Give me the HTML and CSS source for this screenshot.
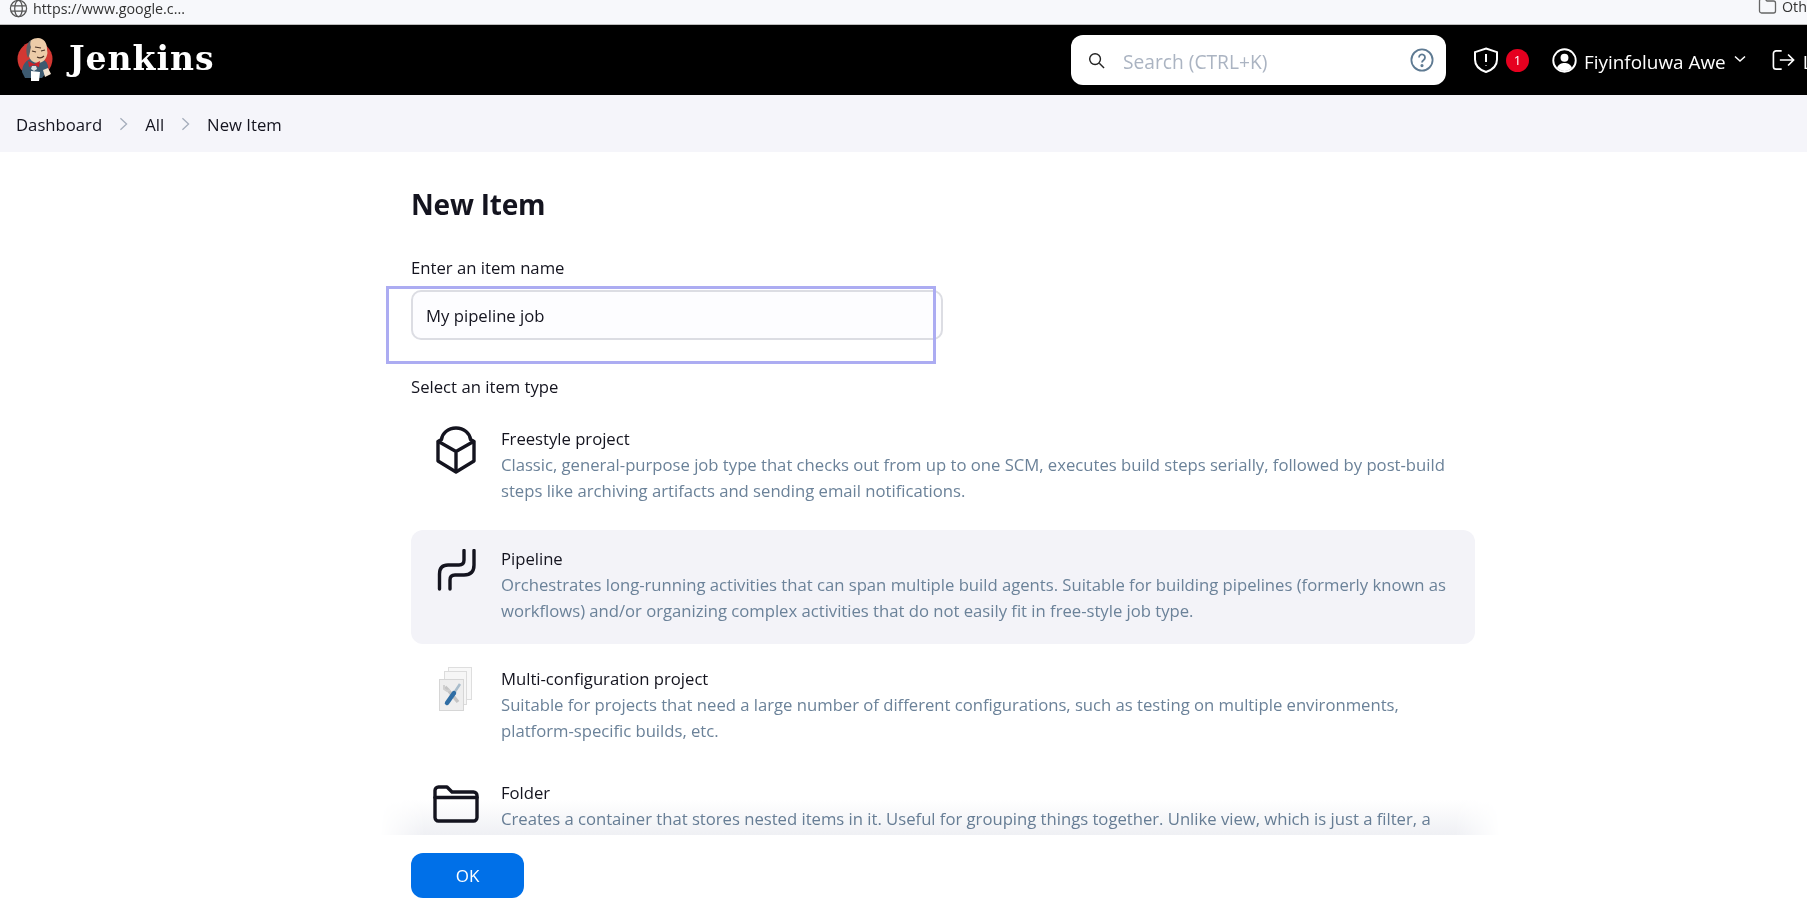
FILE: index.html
```html
<!DOCTYPE html>
<html lang="en">
<head>
<meta charset="utf-8">
<title>New Item - Jenkins</title>
<link rel="stylesheet" href="styles.css">
</head>
<body>
<div class="tabbar">
  <div class="tab">
    <svg class="globe" viewBox="0 0 20 20"><circle cx="10" cy="10" r="8.5"/><ellipse cx="10" cy="10" rx="4" ry="8.5"/><path d="M2 7.2h16M2 12.8h16"/></svg>
    <span>https://www.google.c...</span>
  </div>
  <div class="tab">
    <svg class="bookmark" viewBox="0 0 18 16"><path d="M1 3a2 2 0 0 1 2-2h3.5l2 2H15a2 2 0 0 1 2 2v8a2 2 0 0 1-2 2H3a2 2 0 0 1-2-2z"/></svg>
    <span>Oth</span>
  </div>
</div>
<header class="header">
  <div class="brand">
    <svg class="logo" viewBox="0 0 37 43">
      <circle cx="18" cy="21" r="17.500" fill="#d33833"/>
      <path d="M5 34c0-6 3-11 8-13l12 0c5 2 7 7 6 12l-6 7H8z" fill="#3d5a70"/>
      <path d="M11 9C11 3 16 0 21 0c6 0 9 5 9 11 0 2 1 4 0 6-1 5-5 8-9 8-5 0-8-3-9-7-1-3-1-6 0-9z" fill="#eccba8"/>
      <path d="M11 20C8 14 9 5 14 2c-1 3-1 5 0 7-1 3-1 8-3 11z" fill="#5b5f66"/>
      <path d="M18 9l6 1M15 13l4 1M24 13l4-1M20 19c2 1 5 1 7-1" stroke="#4a3226" stroke-width="1.200" fill="none"/>
      <path d="M11 23l6 3 6-3-1 6-5-2-5 2z" fill="#c8202a"/>
      <path d="M15 28h4l1 3-3 2-3-2z" fill="#d9dde0"/>
      <path d="M14 33l9 1-1 9H14z" fill="#fff"/>
      <path d="M26 32l5-2 3 6-6 3z" fill="#f3e4d2"/>
    </svg>
    <span class="wordmark">Jenkins</span>
  </div>
  <div class="header-right">
    <div class="search">
      <svg class="search-icon" viewBox="0 0 18 18"><circle cx="7.5" cy="7.5" r="5.7"/><path d="M12 12l5 5"/></svg>
      <span class="search-text">Search (CTRL+K)</span>
      <svg class="help" viewBox="0 0 24 24"><circle cx="12" cy="12" r="10.6"/><path d="M9 9.400a3 3 0 1 1 4.700 2.500c-1 .7-1.700 1.200-1.700 2.600"/><circle class="dot" cx="12" cy="17.600" r=".7"/></svg>
    </div>
    <div class="alerts">
      <svg class="shield" viewBox="0 0 26 26"><path d="M13 1.500l11 3.600v7.400c0 6-4.400 10.300-11 12.500C6.400 22.800 2 18.500 2 12.500V5.100z"/><path d="M13 7v8M13 18.500v.6"/></svg>
      <span class="badge">1</span>
    </div>
    <div class="user">
      <svg class="avatar" viewBox="0 0 24 24"><circle class="ring" cx="12" cy="12" r="10.800"/><circle class="fill" cx="12" cy="9.300" r="3.800"/><path class="fill" d="M4.800 19c1.500-3.600 4.200-4.600 7.200-4.600s5.700 1 7.200 4.600A10 10 0 0 1 12 22a10 10 0 0 1-7.200-3z"/></svg>
      <span class="username">Fiyinfoluwa Awe</span>
      <svg class="chev" viewBox="0 0 12 8"><path d="M1 1.500l5 4.500 5-4.500"/></svg>
    </div>
    <div class="logout">
      <svg class="logout-icon" viewBox="0 0 26 24"><path d="M11 2H5a3 3 0 0 0-3 3v14a3 3 0 0 0 3 3h6M9 12h15M18 6l6 6-6 6"/></svg>
      <span class="username">Log out</span>
    </div>
  </div>
</header>
<nav class="crumbs">
  <span>Dashboard</span>
  <svg class="sep" viewBox="0 0 10 16"><path d="M1.500 1.500L8.500 8l-7 6.500"/></svg>
  <span>All</span>
  <svg class="sep" viewBox="0 0 10 16"><path d="M1.500 1.500L8.500 8l-7 6.500"/></svg>
  <span>New Item</span>
</nav>
<main class="main">
  <h1 class="title">New Item</h1>
  <label class="field-label">Enter an item name</label>
  <div class="input">My pipeline job</div>
  <p class="type-label">Select an item type</p>
  <ul class="items">
    <li class="item">
      <div class="icon-cell">
        <svg class="item-icon icon-freestyle" viewBox="0 0 40 48"><path d="M20 2c8 0 14 5.500 14.500 11.500l3.500 2v19.500L20 46 2 35V15.500l3.500-2C6 7.500 12 2 20 2z"/><path d="M2.500 15.500L20 25.500l17.500-10M20 25.500V45"/></svg>
      </div>
      <div class="item-body">
        <div class="item-name">Freestyle project</div>
        <div class="item-desc">Classic, general-purpose job type that checks out from up to one SCM, executes build steps serially, followed by post&#8209;build steps like archiving artifacts and sending email notifications.</div>
      </div>
    </li>
    <li class="item active">
      <div class="icon-cell">
        <svg class="item-icon icon-pipeline" viewBox="0 0 39 42"><path d="M2.500 40V25Q2.500 16 11 16H22Q27 16 27 11V1.500"/><path d="M13 40V31Q13 26 18 26H27Q37 26 37 16V1.500"/></svg>
      </div>
      <div class="item-body">
        <div class="item-name">Pipeline</div>
        <div class="item-desc">Orchestrates long-running activities that can span multiple build agents. Suitable for building pipelines (formerly known as workflows) and/or organizing complex activities that do not easily fit in free-style job type.</div>
      </div>
    </li>
    <li class="item item-short">
      <div class="icon-cell">
        <svg class="icon-multi" viewBox="0 0 33 44">
          <rect x="9.500" y=".5" width="23" height="32" fill="#f8f8f8" stroke="#dedede"/>
          <rect x="5.500" y="4.500" width="22" height="33" fill="#f6f6f6" stroke="#dcdcdc"/>
          <rect x=".5" y="12.500" width="24" height="31" fill="#eeeeee" stroke="#d6d6d6"/>
          <path d="M6 20l3 3 10 12" stroke="#c4c4c4" stroke-width="3.500"/>
          <path d="M5 18v4l3 2 3-1" stroke="#d0d0d0" stroke-width="2"/>
          <path d="M21 17l-6 9" stroke="#a8bccb" stroke-width="2.500"/>
          <path d="M15 26l-7 10" stroke="#2f6ea5" stroke-width="4.500" stroke-linecap="round"/>
        </svg>
      </div>
      <div class="item-body">
        <div class="item-name">Multi-configuration project</div>
        <div class="item-desc">Suitable for projects that need a large number of different configurations, such as testing on multiple environments, platform-specific builds, etc.</div>
      </div>
    </li>
    <li class="item">
      <div class="icon-cell">
        <svg class="item-icon icon-folder" viewBox="0 0 46 38"><path d="M2 5.500a3.500 3.500 0 0 1 3.500-3.500H14l5 5h21.500a3.500 3.500 0 0 1 3.500 3.500V32.500a3.500 3.500 0 0 1-3.500 3.500H5.500A3.500 3.500 0 0 1 2 32.500z"/><path d="M2 12.500h42"/></svg>
      </div>
      <div class="item-body">
        <div class="item-name">Folder</div>
        <div class="item-desc">Creates a container that stores nested items in it. Useful for grouping things together. Unlike view, which is just a filter, a folder creates a separate namespace, so you can have multiple things of the same name as long as they are in different folders.</div>
      </div>
    </li>
  </ul>
</main>
<div class="highlight"></div>
<div class="footer"><button class="ok" type="button">OK</button></div>
</body>
</html>
```
FILE: styles.css
```css
* { box-sizing: border-box; }
html, body { height: 902px; overflow: hidden; }
body { margin: 0; background: #fff; color: #14141f; font-family: "Open Sans", "Noto Sans", sans-serif; position: relative; }
svg { fill: none; flex: none; display: block; }

.tabbar { height: 25px; background: #f7f8fb; border-bottom: 1px solid #bdbdbd; display: flex; justify-content: space-between; align-items: flex-start; font-size: 14.300px; line-height: 16px; color: #333; }
.tab { display: flex; align-items: center; gap: 5px; padding-left: 9px; margin-top: -1px; }
.globe { width: 19px; height: 19px; stroke: #555; stroke-width: 1.300; }
.bookmark { width: 19px; height: 16px; stroke: #666; stroke-width: 1.300; margin-top: -2px; }

.header { height: 70px; background: #000; display: flex; align-items: center; padding-left: 17px; overflow: hidden; }
.brand { display: flex; align-items: center; gap: 15px; width: 1054px; flex: none; }
.logo { width: 37px; height: 43px; margin-top: -2px; }
.wordmark { font-family: "DejaVu Serif", serif; font-weight: 700; font-size: 33px; line-height: 40px; margin-top: -3px; letter-spacing: 1px; color: #fff; }
.header-right { display: flex; align-items: center; flex: none; }
.search { width: 375px; height: 50px; background: #fff; border-radius: 12px; display: flex; align-items: center; padding: 0 12px 0 17px; }
.search-icon { width: 17px; height: 17px; stroke: #222; stroke-width: 1.500; }
.search-text { flex: 1; margin-left: 18px; padding-top: 3px; font-size: 19.200px; color: #abb4c2; }
.help { width: 24px; height: 24px; stroke: #5e7a92; stroke-width: 1.800; }
.help .dot { fill: #5e7a92; }
.alerts { display: flex; align-items: center; margin-left: 27px; gap: 7px; }
.shield { width: 26px; height: 26px; stroke: #fff; stroke-width: 2; }
.badge { width: 23px; height: 23px; border-radius: 50%; background: #e6001f; color: #fff; font-size: 13px; display: flex; align-items: center; justify-content: center; }
.user { display: flex; align-items: center; margin-left: 23px; }
.avatar { width: 25px; height: 25px; }
.avatar .ring { stroke: #fff; stroke-width: 1.800; }
.avatar .fill { fill: #fff; }
.username { color: #fff; font-size: 18.900px; margin-left: 7px; padding-top: 3px; white-space: nowrap; }
.chev { width: 12px; height: 8px; stroke: #fff; stroke-width: 1.500; margin-left: 8px; margin-top: -3px; }
.logout { display: flex; align-items: center; margin-left: 25px; }
.logout-icon { width: 25px; height: 22px; stroke: #fff; stroke-width: 1.800; }

.crumbs { height: 57px; background: #f5f5fa; display: flex; align-items: center; padding: 1px 0 0 16px; font-size: 16.700px; color: #14141f; }
.sep { width: 9px; height: 14px; stroke: #a5adbb; stroke-width: 1.500; margin: 0 17px; }

.main { width: 1064px; margin-left: 411px; font-size: 16.700px; }
.title { margin: 32px 0 0; font-size: 28px; line-height: 40px; font-weight: 700; letter-spacing: -.2px; color: #14141f; }
.field-label { display: block; margin-top: 32px; line-height: 24px; }
.input { margin-top: 10px; width: 532px; height: 50px; border: 2px solid #dcdde3; border-radius: 10px; background: #fdfdff; line-height: 47px; padding-left: 13px; color: #14141f; }
.type-label { margin: 35px 0 0; line-height: 24px; }
.items { list-style: none; margin: 11px 0 0; padding: 0; }
.item { display: flex; height: 114px; margin-bottom: 6px; border-radius: 12px; }
.item-short { height: 108px; }
.item.active { background: #f3f3f8; }
.icon-cell { width: 90px; flex: none; }
.item-icon { stroke: #14141f; stroke-width: 3.400; stroke-linejoin: round; stroke-linecap: round; }
.icon-freestyle { width: 40px; height: 48px; margin: 16px 0 0 25px; }
.icon-pipeline { width: 39px; height: 42px; margin: 19px 0 0 26px; }
.icon-multi { width: 33px; height: 44px; margin: 17px 0 0 28px; }
.icon-folder { width: 46px; height: 38px; margin: 21px 0 0 22px; }
.item-body { padding: 16px 16px 0 0; flex: 1; letter-spacing: -.02px; }
.item-name { line-height: 26px; color: #14141f; }
.item-desc { line-height: 26px; color: #6b8299; }

.highlight { position: absolute; left: 386px; top: 286px; width: 550px; height: 78px; border: 3px solid #acacf2; }
.footer { position: absolute; left: 0; right: 0; top: 835px; bottom: 0; padding: 18px 0 0 411px; background: #fff; }
.footer::before { content: ""; position: absolute; left: 380px; width: 1120px; top: -35px; height: 35px; background: linear-gradient(#fff, #eff0f4); mix-blend-mode: multiply; -webkit-mask-image: linear-gradient(to right, transparent, #000 4%, #000 96%, transparent); mask-image: linear-gradient(to right, transparent, #000 4%, #000 96%, transparent); }
.ok { width: 113px; height: 45px; border: 0; border-radius: 12px; background: #0070e8; color: #fff; font: 17px "Open Sans", sans-serif; display: block; }
```
